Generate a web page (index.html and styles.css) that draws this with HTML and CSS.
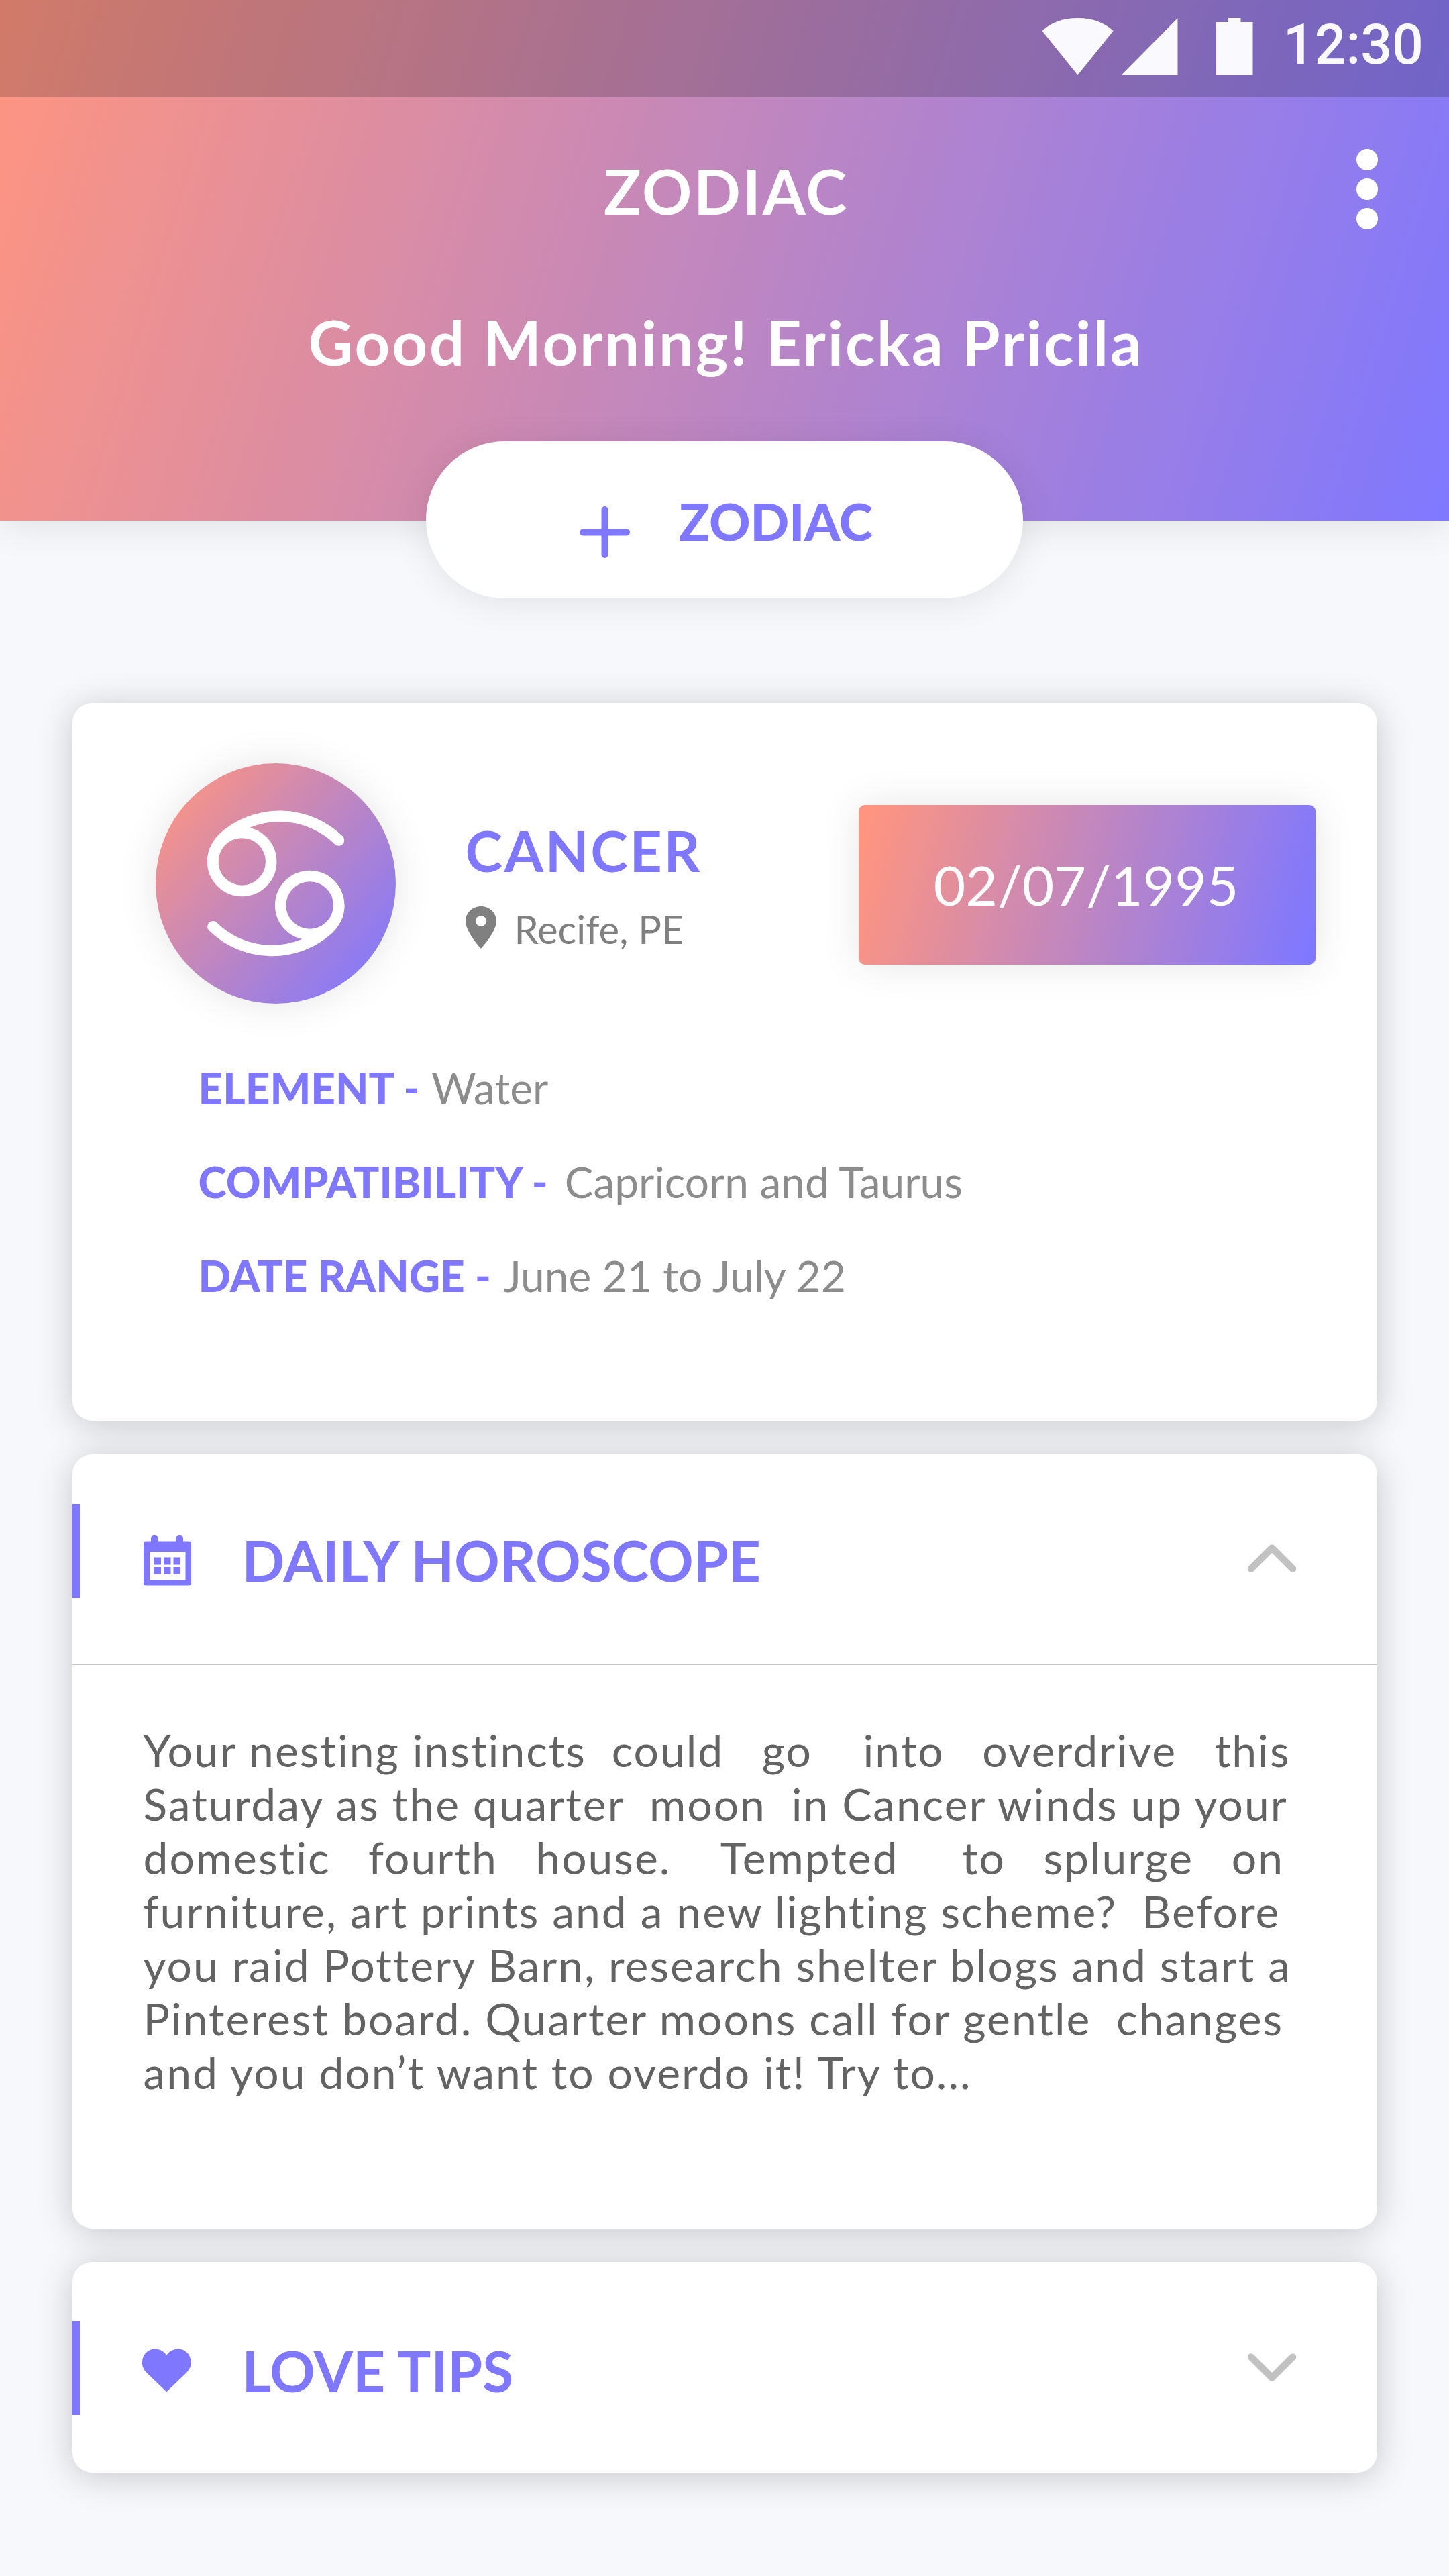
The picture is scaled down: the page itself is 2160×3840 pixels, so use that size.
FILE: index.html
```html
<!DOCTYPE html>
<html lang="en">
<head>
  <meta charset="utf-8">
  <title>Zodiac</title>
  <link rel="stylesheet" href="styles.css">
</head>
<body>
  <header class="hero">
    <div class="status-bar">
      <svg class="status-icons" viewBox="0 0 315 85" aria-hidden="true">
        <path d="M0.5 19C13 7 31 0 53.500 0S94 7 106.500 19L53.500 85Z"/>
        <path d="M118.500 85H202.500V0Z"/>
        <path d="M260 6H278V0H296.500V6H314.500V85H260Z"/>
      </svg>
      <span class="clock">12:30</span>
    </div>
    <div class="app-bar">
      <h1 class="app-title">ZODIAC</h1>
      <svg class="menu" viewBox="0 0 32 120" aria-label="Menu">
        <circle cx="16" cy="16" r="16"/><circle cx="16" cy="60" r="16"/><circle cx="16" cy="104" r="16"/>
      </svg>
    </div>
    <p class="greeting">Good Morning! Ericka Pricila</p>
  </header>

  <main class="content">
    <button class="add-button" type="button">
      <svg class="plus" viewBox="0 0 75 77" aria-hidden="true">
        <path d="M5 38.500H70M37.500 5V72"/>
      </svg>
      <span class="add-label">ZODIAC</span>
    </button>

    <div class="cards">
      <section class="card profile">
        <div class="profile-head">
          <div class="sign">
            <svg viewBox="0 0 358 358" aria-hidden="true">
              <circle cx="128.700" cy="146.400" r="43.500"/>
              <circle cx="229.700" cy="211.400" r="43.500"/>
              <path d="M273 114.500A126 126 0 0 0 100 111.700Q85.200 127 85.200 146.400"/>
              <path d="M85.400 243.300A126 126 0 0 0 258.400 246.100Q273.200 230.800 273.200 211.400"/>
            </svg>
          </div>
          <div class="who">
            <h2 class="sign-name">CANCER</h2>
            <div class="place">
              <svg class="pin" viewBox="0 0 14 20" preserveAspectRatio="none" aria-hidden="true">
                <path d="M7 0C3.130 0 0 3.130 0 7c0 5.250 7 13 7 13s7-7.750 7-13c0-3.870-3.130-7-7-7zm0 9.500a2.500 2.500 0 0 1 0-5 2.500 2.500 0 0 1 0 5z"/>
              </svg>
              <span class="place-name">Recife, PE</span>
            </div>
          </div>
          <div class="date">02/07/1995</div>
        </div>
        <dl class="facts">
          <div class="fact"><dt>ELEMENT -</dt><dd>Water</dd></div>
          <div class="fact fact-wide"><dt>COMPATIBILITY -</dt><dd>Capricorn and Taurus</dd></div>
          <div class="fact"><dt>DATE RANGE -</dt><dd>June 21 to July 22</dd></div>
        </dl>
      </section>

      <section class="card horoscope">
        <div class="section-head">
          <span class="accent"></span>
          <svg class="icon" viewBox="0 0 76 76" aria-hidden="true">
            <path fill-rule="evenodd" d="M7 9.500H14V5A5.200 5.200 0 0 1 24.500 5V9.500H51.500V5A5.200 5.200 0 0 1 62 5V9.500H70A4 4 0 0 1 74 13.500V71.500A4 4 0 0 1 70 75.500H7A4 4 0 0 1 3 71.500V13.500A4 4 0 0 1 7 9.500ZM12 25V67.500H65.500V25Z"/>
            <path d="M18 33.500h11v11h-11zM33 33.500h10.500v11H33zM47.500 33.500H58v11H47.500zM18 48h11v11h-11zM33 48h10.500v11H33zM47.500 48H58v11H47.500z"/>
          </svg>
          <h2 class="section-title">DAILY HOROSCOPE</h2>
          <svg class="chevron" viewBox="0 0 74 42" aria-label="Collapse">
            <path d="M6 36.500L37 5.500L68 36.500"/>
          </svg>
        </div>
        <p class="reading">Your nesting instincts  could   go    into   overdrive   this
Saturday as the quarter  moon  in Cancer winds up your
domestic   fourth   house.    Tempted     to   splurge   on
furniture, art prints and a new lighting scheme?  Before
you raid Pottery Barn, research shelter blogs and start a
Pinterest board. Quarter moons call for gentle  changes
and you don’t want to overdo it! Try to...</p>
      </section>

      <section class="card love">
        <div class="section-head">
          <span class="accent"></span>
          <svg class="icon" viewBox="0 0 76 66" aria-hidden="true">
            <path d="M37.300 64.500L7.500 36C2.500 31 1 26 1 20.500C1 9 9.500 0.500 20 0.500C27 0.500 33.500 4 37.300 10C41 4 47.500 0.500 54.500 0.500C65 0.500 73.600 9 73.600 20.500C73.600 26 72 31 67 36Z"/>
          </svg>
          <h2 class="section-title">LOVE TIPS</h2>
          <svg class="chevron" viewBox="0 0 74 42" aria-label="Expand">
            <path d="M6 5.500L37 36.500L68 5.500"/>
          </svg>
        </div>
      </section>
    </div>
  </main>
</body>
</html>
```
FILE: styles.css
```css
* { box-sizing: border-box; margin: 0; padding: 0; }

:root {
  --violet: #7f78ff;
  --salmon: #ff9580;
}

body {
  width: 2160px;
  height: 3840px;
  overflow: hidden;
  background: #f7f8fc;
  font-family: Lato, "Open Sans", sans-serif;
  line-height: 1.2;
}

/* Header */
.hero {
  height: 776px;
  background: linear-gradient(107deg, var(--salmon), var(--violet));
  box-shadow: 0 6px 54px rgba(0, 0, 0, .1);
  color: #fff;
}

.status-bar {
  height: 145px;
  padding: 27px 38px 0 0;
  display: flex;
  justify-content: flex-end;
  align-items: flex-start;
  background: rgba(0, 0, 0, .18);
}

.status-icons { width: 315px; height: 85px; margin-right: 45px; fill: #faf9fe; }

.clock {
  margin-top: -9px;
  font: 500 82.500px/98px Roboto, sans-serif;
  color: #faf9fe;
}

.app-bar {
  display: grid;
  grid-template-columns: 1fr auto 1fr;
  align-items: start;
}

.app-title {
  grid-column: 2;
  margin: 85px 0 0 5px;
  font-size: 92px;
  line-height: 110px;
  font-weight: 700;
  letter-spacing: 2.700px;
}

.menu {
  grid-column: 3;
  justify-self: end;
  width: 32px;
  height: 120px;
  margin: 77px 106px 0 0;
  fill: #fff;
}

.greeting {
  margin-top: 113px;
  padding-left: 4px;
  text-align: center;
  font-size: 92px;
  line-height: 110px;
  font-weight: 700;
  letter-spacing: 2.800px;
}

/* Floating add button */
.content {
  display: flex;
  flex-direction: column;
  align-items: center;
}

.add-button {
  z-index: 1;
  width: 890px;
  height: 234px;
  margin-top: -118px;
  padding: 0 0 0 229px;
  display: flex;
  align-items: flex-start;
  gap: 73px;
  border: 0;
  border-radius: 117px;
  background: #fff;
  box-shadow: 0 6px 54px rgba(0, 0, 0, .09);
  color: var(--violet);
  font-family: inherit;
}

.plus {
  width: 75px;
  height: 77px;
  margin-top: 97px;
  fill: none;
  stroke: var(--violet);
  stroke-width: 10;
  stroke-linecap: round;
}

.add-label {
  margin-top: 73px;
  font-size: 76px;
  line-height: 92px;
  font-weight: 900;
  letter-spacing: -.100px;
}

/* Cards */
.cards {
  width: 1945px;
  margin-top: 156px;
  display: flex;
  flex-direction: column;
  gap: 50px;
}

.card {
  border-radius: 30px;
  background: #fff;
  box-shadow: 0 6px 54px rgba(0, 0, 0, .2);
}

.profile { height: 1070px; padding: 90px 92px 0 124px; }
.horoscope { height: 1154px; }
.love { height: 314px; }

.profile-head { display: flex; align-items: flex-start; }

.sign {
  width: 358px;
  height: 358px;
  border-radius: 50%;
  background: linear-gradient(130deg, var(--salmon) 5%, var(--violet) 94%);
  box-shadow: 0 0 60px rgba(0, 0, 0, .1);
}

.sign svg {
  display: block;
  fill: none;
  stroke: #fff;
  stroke-width: 16.500;
  stroke-linecap: round;
}

.who { margin: 80px 0 0 104px; }

.sign-name {
  font-size: 84px;
  line-height: 100px;
  letter-spacing: 2.700px;
  color: var(--violet);
}

.place {
  margin-top: 32px;
  display: flex;
  gap: 27px;
  color: #808080;
}

.pin { width: 46px; height: 63px; margin-top: 1px; fill: #808080; }
.place-name { font-size: 58px; line-height: 70px; }

.date {
  width: 681px;
  height: 238px;
  margin: 62px 0 0 auto;
  padding-right: 2px;
  border-radius: 9px;
  background: linear-gradient(105deg, var(--salmon) 2%, var(--violet) 98%);
  box-shadow: 0 0 60px rgba(0, 0, 0, .1);
  color: #fff;
  font-size: 82px;
  line-height: 236px;
  text-align: center;
}

.facts {
  margin: 86px 0 0 64px;
  display: flex;
  flex-direction: column;
  gap: 60px;
  font-size: 64px;
  line-height: 80px;
}

.fact { display: flex; gap: 18px; }
.fact-wide { gap: 25px; }
.fact dt { font-weight: 900; color: var(--violet); }
.fact dd { color: #8c8c8c; }

/* Expandable sections */
.section-head {
  height: 314px;
  padding-right: 120px;
  display: flex;
  align-items: flex-start;
}

.horoscope .section-head { border-bottom: 2px solid #c8c8c8; }

.accent { width: 12px; height: 140px; background: var(--violet); }
.icon { width: 76px; margin-left: 91px; fill: var(--violet); }

.section-title {
  margin-left: 74px;
  font-size: 83.900px;
  line-height: 100px;
  color: var(--violet);
}

.chevron {
  width: 74px;
  height: 42px;
  margin-left: auto;
  fill: none;
  stroke: #c2c2c2;
  stroke-width: 10.500;
  stroke-linecap: round;
  stroke-linejoin: round;
}

.horoscope .accent { margin-top: 74px; }
.horoscope .icon { height: 76px; margin-top: 120px; }
.horoscope .section-title { margin-top: 108px; }
.horoscope .chevron { margin-top: 134px; }

.love .accent { margin-top: 88px; }
.love .icon { height: 66px; margin-top: 129px; }
.love .section-title { margin-top: 112px; }
.love .chevron { margin-top: 136px; }

.reading {
  padding: 87px 0 0 106px;
  font-size: 66px;
  line-height: 80px;
  letter-spacing: 1.980px;
  white-space: pre;
  color: #636363;
}
```
